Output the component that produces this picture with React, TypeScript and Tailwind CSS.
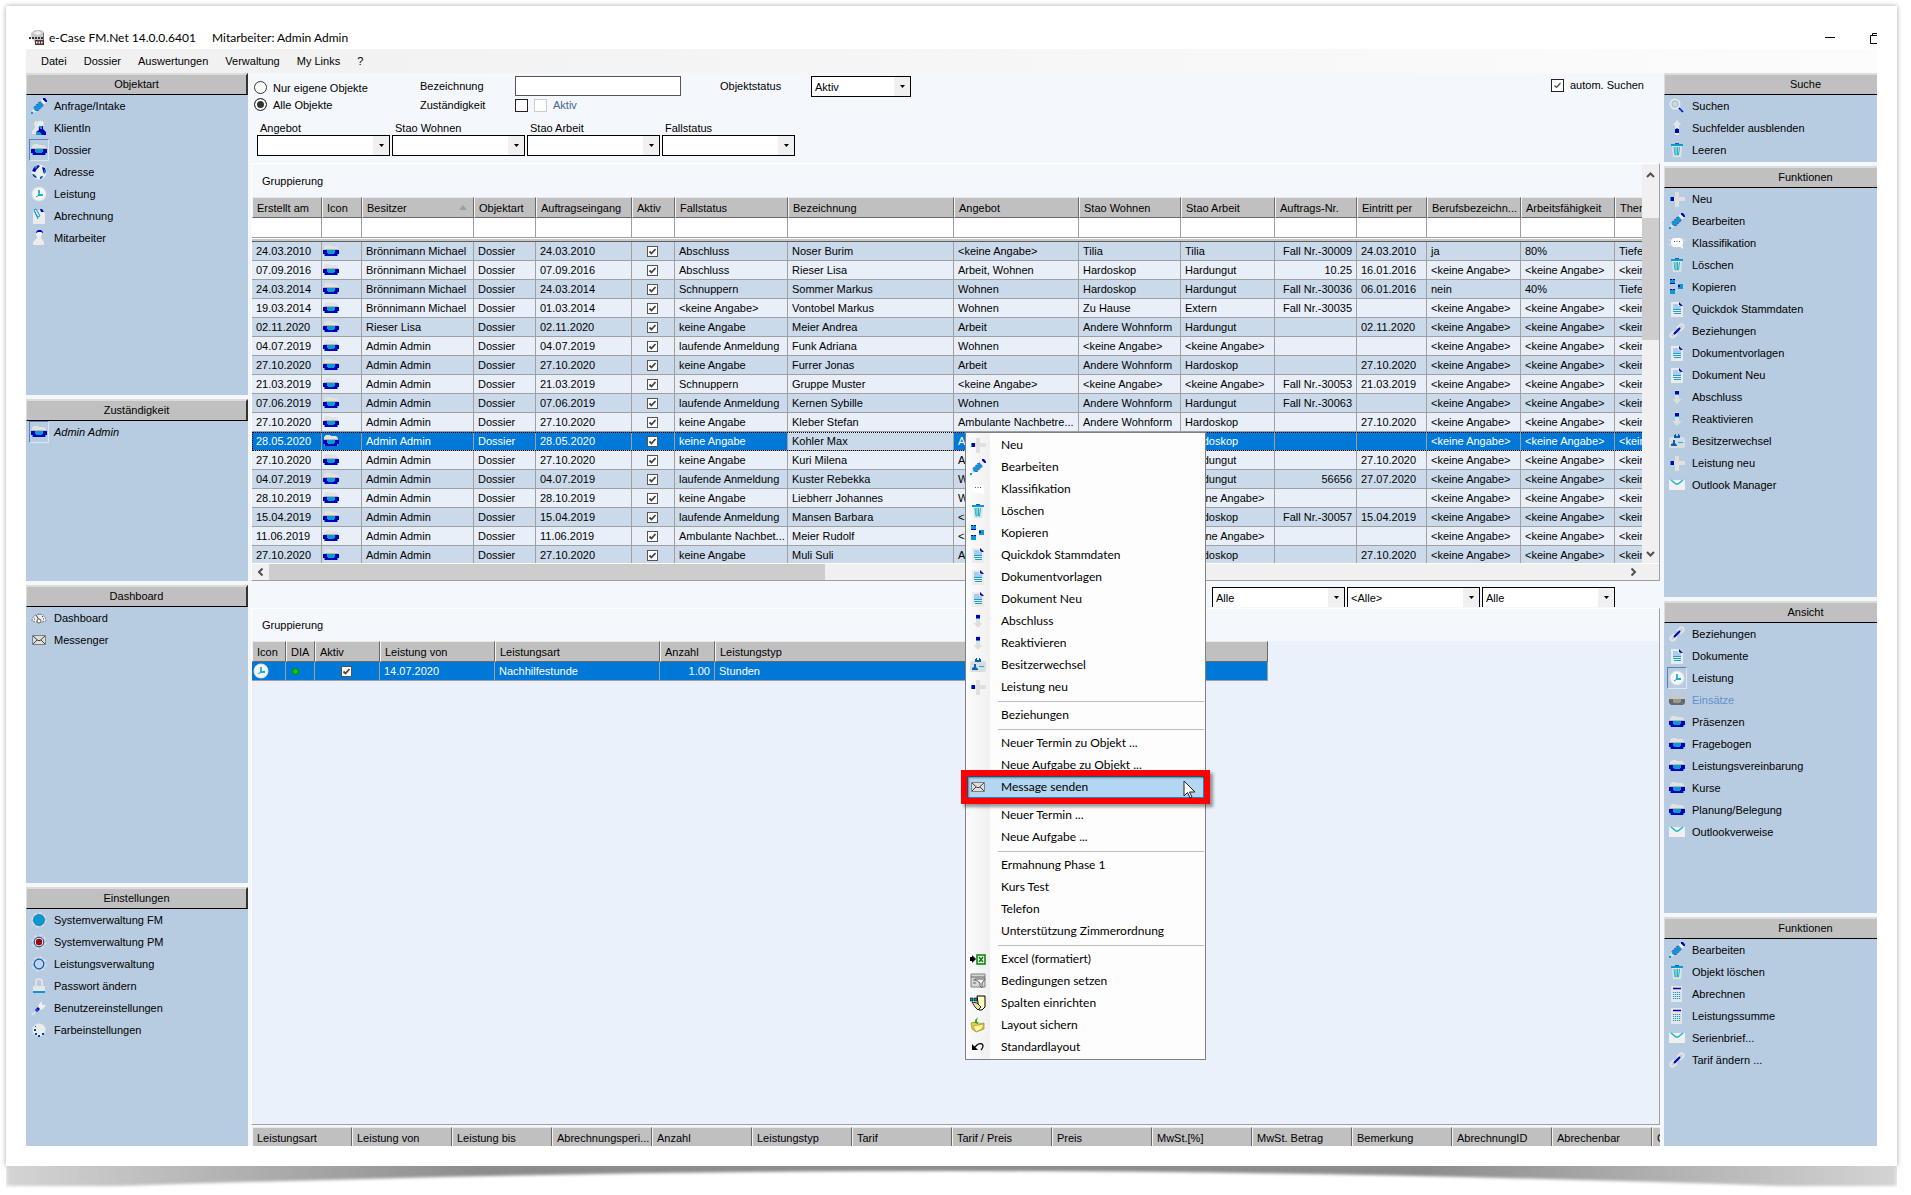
import type { ReactNode } from 'react'
import clsx from 'clsx'

type IconName =
  | 'pencil' | 'person' | 'folder' | 'folderGray' | 'globe' | 'clock' | 'clip' | 'staff'
  | 'gauge' | 'mail' | 'gearFull' | 'gearRed' | 'gearRing' | 'lock' | 'wrench' | 'palette'
  | 'search' | 'up' | 'trash' | 'plus' | 'bubble' | 'copy' | 'doc' | 'link' | 'down'
  | 'badge' | 'outlook' | 'calc' | 'excel' | 'filter' | 'columns' | 'save' | 'undo' | 'none'

interface Item {
  icon: IconName
  label: string
  active?: boolean
  disabled?: boolean
  italic?: boolean
}

const gearTeeth = (
  <circle cx="8" cy="8" r="6.8" fill="none" stroke="#dcdcdc" strokeWidth="1.8" strokeDasharray="3 2.3" />
)

const icons: Record<IconName, ReactNode> = {
  none: null,
  pencil: (
    <>
      <path d="M3 10 9.500 3.500 12.500 6.500 6 13l-3.500 0z" fill="#0a9ad2" />
      <path d="M3 9.500 9.500 3M6.500 13l6-6" stroke="#0000b8" strokeWidth="1" strokeDasharray="2 1" />
      <path d="M9.500 2.500 11.500 1l3.500 3.500-2 2z" fill="#f2f2f2" />
      <path d="M12 0h2l2 2.500V4h-1.500L12 1.500z" fill="#0000b8" />
      <path d="M1 12.500 2.500 11 5 13.500 3 14.500z" fill="#e6e6e6" />
      <path d="M0 14h2v2H0z" fill="#0a9ad2" />
    </>
  ),
  person: (
    <>
      <path d="M4 1h2l1 3v4l1 2v4H1v-3l3-3-1-4z" fill="#e6e6e6" />
      <circle cx="9.500" cy="4" r="3.200" fill="#ececec" />
      <path d="M8 6h4v3l3 3v3H5v-3l3-2z" fill="#0000b8" />
      <path d="M8 6h3v3H9zM5 12h4l2 3H5z" fill="#0a9ad2" />
    </>
  ),
  folder: (
    <>
      <path d="M1 6V4l2-2h4l1 1h5l2 2v2H1z" fill="#e2e2e2" />
      <path d="M1 6.500h14" stroke="#b4b4b4" />
      <path d="M0 7h16v4h-1v2H1v-2H0z" fill="#0000b8" />
      <path d="M4 7h8v3h-1v1H5v-1H4z" fill="#0a9ad2" />
      <path d="M1 11h1v2H1zM14 11h1v2h-1z" fill="#18a0d0" />
    </>
  ),
  folderGray: (
    <>
      <path d="M1 6V4l2-2h4l1 1h5l2 2v2H1z" fill="#c8c8c8" />
      <path d="M0 7h16v4l-2 2H2l-2-2z" fill="#686868" />
      <path d="M4 7h8v3l-2 1H6l-2-1z" fill="#989898" />
    </>
  ),
  globe: (
    <>
      <circle cx="8" cy="8" r="7.500" fill="#e8eef4" />
      <path d="M3 3 7 1l2 1-3 3-2 3-3-1zM11 3l3 1 1 4-2 2-1-3zM1 10l3 1 2 3-3-1zM9 13l3-1-1 2-2 1z" fill="#0000b8" />
      <path d="M3 3 7 1 5 5zM13 5l2 3-2 2zM2 10l2 1v2zM9 13l2-1-1 3z" fill="#0a9ad2" />
    </>
  ),
  clock: (
    <>
      <circle cx="8" cy="8" r="7.500" fill="#dedede" />
      <circle cx="8" cy="8" r="6.500" fill="#f6f6f6" />
      <path d="M8 4v5h4" fill="none" stroke="#18b4cc" strokeWidth="1.800" />
      <path d="M8 9l-3 2" stroke="#0a9ad2" />
    </>
  ),
  clip: (
    <>
      <path d="M2 2h9l3 3v11H2z" fill="#ebebeb" />
      <path d="M3 3l4 6 2-1-4-7-2 1 4 9" fill="none" stroke="#0a9ad2" />
      <path d="M9 1h2l2 3h-3z" fill="#0000b8" />
    </>
  ),
  staff: (
    <>
      <circle cx="8" cy="4" r="3" fill="#f0f0f0" />
      <path d="M5 3V2l2-2h3l2 2v1l-2-1H7z" fill="#0000b8" />
      <path d="M6 6h4v2l3 4v3H2v-3l4-4z" fill="#ececec" />
    </>
  ),
  gauge: (
    <>
      <path d="M1 11a7 7 0 0 1 14 0l-4 1H5z" fill="#ececec" stroke="#808080" strokeDasharray="2 1" />
      <path d="M8 10 5 5M3 9l1 0M8 4v1M12 6l-1 1M12 9h1" stroke="#404040" />
      <circle cx="8" cy="11" r="2" fill="#fff" stroke="#606060" />
    </>
  ),
  mail: (
    <>
      <path d="M1.500 3.500h13v9h-13z" fill="#dedede" stroke="#808080" />
      <path d="M2 4l5 4.500h2L14 4M2 12l4-4M14 12l-4-4" fill="none" stroke="#404040" />
    </>
  ),
  gearFull: (
    <>
      {gearTeeth}
      <circle cx="8" cy="8" r="5.500" fill="#0a9ad2" stroke="#0060b8" strokeWidth=".6" />
    </>
  ),
  gearRed: (
    <>
      {gearTeeth}
      <circle cx="8" cy="8" r="4.800" fill="#e8e8e8" stroke="#1040a8" strokeWidth="1" />
      <circle cx="8" cy="8" r="3.200" fill="#a00000" />
    </>
  ),
  gearRing: (
    <>
      {gearTeeth}
      <circle cx="8" cy="8" r="4.800" fill="#c4d4e6" stroke="#0060c0" strokeWidth="1.200" />
    </>
  ),
  lock: (
    <>
      <path d="M5 8V4a3 3 0 0 1 6 0v4" fill="none" stroke="#e0e0e0" strokeWidth="2" />
      <path d="M2 8h12v5H2z" fill="#e6e6e6" />
      <path d="M2 13h12v2H2z" fill="#0a9ad2" />
    </>
  ),
  wrench: (
    <>
      <path d="M7 8 8 4l3-3v4h4l-3 4-3 1z" fill="#f0f0f0" />
      <path d="M4 10l3-3 2 2-3 3z" fill="#0000b8" />
      <path d="M5 10l1-1 1 1-1 1z" fill="#0a9ad2" />
      <path d="M4 12l-3 3" stroke="#e0e0e0" strokeWidth="2" />
    </>
  ),
  palette: (
    <>
      <circle cx="8" cy="8" r="6.500" fill="#ececec" />
      <path d="M4 4h1v1H4zM3 7h2v2H3zM4 11h2v2H4zM7 13h2v2H7zM11 11h2v2h-2z" fill="#0040b8" />
      <path d="M12 2h1v1h-1zM14 5h1v1h-1zM1 5h1v1H1zM1 11h1v1H1z" fill="#e0e0e0" />
    </>
  ),
  search: (
    <>
      <circle cx="6" cy="6" r="4.800" fill="#c8dae8" stroke="#e8e8e8" strokeWidth="1.500" />
      <circle cx="6" cy="6" r="3" fill="none" stroke="#90b8c0" strokeWidth=".7" />
      <path d="M10 10l4 4" stroke="#0000b8" strokeWidth="1.600" />
      <path d="M11 12l1 1" stroke="#0a9ad2" strokeWidth="1.500" />
    </>
  ),
  up: (
    <>
      <path d="M8 0l4 5H10v10H6V5H4z" fill="#e6e6e6" />
      <path d="M6 9h4v4H6z" fill="#0000b8" />
      <path d="M7 8h2v1H7z" fill="#0a9ad2" />
    </>
  ),
  down: (
    <>
      <path d="M8 15l4.500-5H10V1H6v9H3.500z" fill="#dedede" />
      <path d="M6 2h4v4H6z" fill="#0000b8" />
      <path d="M6 5h4v1H6z" fill="#0a9ad2" />
    </>
  ),
  trash: (
    <>
      <path d="M3 4h10l-1 11H4z" fill="#e2e2e2" />
      <path d="M2 2h12v2H2z" fill="#0a9ad2" />
      <path d="M6 1h4v1H6z" fill="#0a60c0" />
      <path d="M5 5l1 8h1V5M8.500 5v8h1l1-8" fill="none" stroke="#18b4cc" />
    </>
  ),
  plus: (
    <>
      <path d="M6 1h4v5h6v4h-6v6H6v-6H1V6h5z" fill="#e0e0e0" />
      <path d="M1 6h2v4H1z" fill="#0a9ad2" />
      <path d="M2 6h3v4H2z" fill="#0000b8" />
    </>
  ),
  bubble: (
    <>
      <rect x="2" y="3" width="12" height="9" rx="4" fill="#fff" />
      <path d="M10 11h4v3z" fill="#fff" />
      <path d="M5 6h1v1H5zM7.500 6h1v1h-1zM10 6h1v1h-1z" fill="#406080" />
      <path d="M0 5h1M0 10h1M15 5h1" stroke="#fff" />
    </>
  ),
  copy: (
    <>
      <path d="M1 0h5v5H1zM1 10h5v5H1zM9 5h5v5H9z" fill="#0a9ad2" />
      <path d="M1 0h2v1H1zM4 0h2v1H4zM1 4h5v1H1zM1 10h2v1H1zM4 10h2v1H4zM9 6h2v2H9z" fill="#0000b8" />
      <path d="M7 3l2 2M7 13l2-2M14 8h2" stroke="#e0e0e0" strokeDasharray="1 1" />
    </>
  ),
  doc: (
    <>
      <path d="M2 1h9l3 3v12H2z" fill="#ebebeb" />
      <path d="M4 3h5v2h3v3H4z" fill="#a8ccf0" />
      <path d="M10 1l4 4h-2l-2-1z" fill="#0000a0" />
      <path d="M4 8.500h8M4 10.500h8M5 12.500h7" stroke="#18a0c8" />
    </>
  ),
  link: (
    <>
      <path d="M8 5 11 2a2 2 0 0 1 3 3l-3 3M5 8 2 11a2 2 0 0 0 3 3l3-3" fill="none" stroke="#e4e4e4" strokeWidth="2" />
      <path d="M5 11l6-6" stroke="#0000b8" strokeWidth="2" />
    </>
  ),
  badge: (
    <>
      <rect x="0" y="4" width="16" height="11" rx="2" fill="#dcdcdc" />
      <path d="M5 5V2h1V1h1v2h2V1h1v1h1v3z" fill="#0060b8" />
      <path d="M4 7h2v3l2 2v1H2v-2l2-1z" fill="#0a60c0" />
      <path d="M9 7h5v4H9z" fill="#c0e0f8" />
      <path d="M9 9.500h5" stroke="#18b4cc" />
    </>
  ),
  outlook: (
    <>
      <path d="M0 3h16v10H0z" fill="#f0f0f0" />
      <path d="M2 3l5 4h2l5-4" fill="none" stroke="#18b4cc" strokeWidth="1.400" />
    </>
  ),
  calc: (
    <>
      <path d="M2 0h11v16H2z" fill="#e6e6e6" />
      <path d="M4 2.500h8" stroke="#0000b8" strokeWidth="1.500" />
      <path d="M4 6.500h8M4 8.500h8M4 10.500h8M4 12.500h8" stroke="#0a9ad2" strokeDasharray="1.200 .8" strokeWidth="1" />
    </>
  ),
  excel: (
    <>
      <path d="M0 6h2V4l4 4-4 4v-2H0z" fill="#000" />
      <path d="M7 4h8v9H7z" fill="#fff" stroke="#008000" strokeWidth="1.500" />
      <path d="M9 6l4 5M13 6l-4 5" stroke="#008000" strokeWidth="1.500" />
    </>
  ),
  filter: (
    <>
      <path d="M1 1h14v13H1z" fill="#d8d8d8" stroke="#808080" />
      <path d="M1 4h14M3 7h3M3 10h3" stroke="#606060" />
      <path d="M5 6h10l-3 4v5l-2-2v-3z" fill="#f4f4f4" stroke="#606060" />
    </>
  ),
  columns: (
    <>
      <path d="M7 1h8v11l-3 3H9z" fill="#ffffc0" stroke="#000" />
      <path d="M0 3h3v3H0zM4 3h3v3H4z" fill="#00a0a8" stroke="#000" strokeWidth=".6" />
      <path d="M2 7l5 1 4 4-3 3-3-3z" fill="#e0e0a8" stroke="#000" strokeWidth=".8" />
    </>
  ),
  save: (
    <>
      <path d="M1 6l5-1 2 2 6-1v6l-8 3-4-3z" fill="#e8d050" stroke="#a08820" strokeWidth=".7" />
      <path d="M3 9l11-2-2 5-6 3z" fill="#fff4a0" stroke="#a08820" strokeWidth=".6" />
      <path d="M8 0 5 3v2H3l4 2 2-2H7V3z" fill="#40a828" />
    </>
  ),
  undo: (
    <>
      <path d="M2 5v6h6z" fill="#000" />
      <path d="M4 9l3-3c2-2 6-2 6 1 0 2-1 3-2 4" fill="none" stroke="#000" strokeWidth="1.200" />
    </>
  ),
}

function Icon({ name }: { name: IconName }) {
  return (
    <svg viewBox="0 0 16 16" className="size-4 shrink-0" aria-hidden="true">
      {icons[name]}
    </svg>
  )
}

function Check({ label, checked, disabled, small }: { label: string; checked?: boolean; disabled?: boolean; small?: boolean }) {
  return (
    <span className="inline-grid place-items-center align-middle">
      <input
        type="checkbox"
        aria-label={label}
        defaultChecked={checked}
        disabled={disabled}
        className={clsx(
          'col-start-1 row-start-1 appearance-none bg-white border',
          small ? 'size-[11px] border-[#555]' : 'size-[13px]',
          !small && (disabled ? 'border-[#ccc]' : 'border-[#222]'),
        )}
      />
      {checked && (
        <svg viewBox="0 0 11 11" className="col-start-1 row-start-1 size-[11px] pointer-events-none" aria-hidden="true">
          <path d="M2.500 5.500 4.500 7.500 8.500 3" fill="none" stroke="#444" strokeWidth={small ? 1.8 : 1.2} />
        </svg>
      )}
    </span>
  )
}

function Combo({ label, value = '', className }: { label: string; value?: string; className?: string }) {
  return (
    <span className={clsx('grid border border-black bg-white', className)}>
      <select
        aria-label={label}
        className="col-start-1 row-start-1 w-full appearance-none bg-transparent pl-[3px] text-[11px] leading-4 outline-none"
      >
        <option>{value}</option>
      </select>
      <span className="col-start-1 row-start-1 justify-self-end w-4 bg-[#f0f0f0] grid place-items-center pointer-events-none">
        <svg viewBox="0 0 5 3" className="w-[5px] h-[3px]" aria-hidden="true">
          <path d="M0 0h5L2.500 3z" fill="#000" />
        </svg>
      </span>
    </span>
  )
}

/* ── Seitenleisten ─────────────────────────────── */

interface PanelData {
  title: string
  items: Item[]
}

const leftPanels: PanelData[] = [
  {
    title: 'Objektart',
    items: [
      { icon: 'pencil', label: 'Anfrage/Intake' },
      { icon: 'person', label: 'KlientIn' },
      { icon: 'folder', label: 'Dossier', active: true },
      { icon: 'globe', label: 'Adresse' },
      { icon: 'clock', label: 'Leistung' },
      { icon: 'clip', label: 'Abrechnung' },
      { icon: 'staff', label: 'Mitarbeiter' },
    ],
  },
  { title: 'Zuständigkeit', items: [{ icon: 'folder', label: 'Admin Admin', active: true, italic: true }] },
  {
    title: 'Dashboard',
    items: [
      { icon: 'gauge', label: 'Dashboard' },
      { icon: 'mail', label: 'Messenger' },
    ],
  },
  {
    title: 'Einstellungen',
    items: [
      { icon: 'gearFull', label: 'Systemverwaltung FM' },
      { icon: 'gearRed', label: 'Systemverwaltung PM' },
      { icon: 'gearRing', label: 'Leistungsverwaltung' },
      { icon: 'lock', label: 'Passwort ändern' },
      { icon: 'wrench', label: 'Benutzereinstellungen' },
      { icon: 'palette', label: 'Farbeinstellungen' },
    ],
  },
]

const rightPanels: PanelData[] = [
  {
    title: 'Suche',
    items: [
      { icon: 'search', label: 'Suchen' },
      { icon: 'up', label: 'Suchfelder ausblenden' },
      { icon: 'trash', label: 'Leeren' },
    ],
  },
  {
    title: 'Funktionen',
    items: [
      { icon: 'plus', label: 'Neu' },
      { icon: 'pencil', label: 'Bearbeiten' },
      { icon: 'bubble', label: 'Klassifikation' },
      { icon: 'trash', label: 'Löschen' },
      { icon: 'copy', label: 'Kopieren' },
      { icon: 'doc', label: 'Quickdok Stammdaten' },
      { icon: 'link', label: 'Beziehungen' },
      { icon: 'doc', label: 'Dokumentvorlagen' },
      { icon: 'doc', label: 'Dokument Neu' },
      { icon: 'down', label: 'Abschluss' },
      { icon: 'down', label: 'Reaktivieren' },
      { icon: 'badge', label: 'Besitzerwechsel' },
      { icon: 'plus', label: 'Leistung neu' },
      { icon: 'outlook', label: 'Outlook Manager' },
    ],
  },
  {
    title: 'Ansicht',
    items: [
      { icon: 'link', label: 'Beziehungen' },
      { icon: 'doc', label: 'Dokumente' },
      { icon: 'clock', label: 'Leistung', active: true },
      { icon: 'folderGray', label: 'Einsätze', disabled: true },
      { icon: 'folder', label: 'Präsenzen' },
      { icon: 'folder', label: 'Fragebogen' },
      { icon: 'folder', label: 'Leistungsvereinbarung' },
      { icon: 'folder', label: 'Kurse' },
      { icon: 'folder', label: 'Planung/Belegung' },
      { icon: 'outlook', label: 'Outlookverweise' },
    ],
  },
  {
    title: 'Funktionen',
    items: [
      { icon: 'pencil', label: 'Bearbeiten' },
      { icon: 'trash', label: 'Objekt löschen' },
      { icon: 'calc', label: 'Abrechnen' },
      { icon: 'calc', label: 'Leistungssumme' },
      { icon: 'outlook', label: 'Serienbrief...' },
      { icon: 'link', label: 'Tarif ändern ...' },
    ],
  },
]

function Panel({ title, items, clipped }: PanelData & { clipped?: boolean }) {
  return (
    <section className="bg-[#b8cce1] overflow-hidden">
      <h2
        className={clsx(
          'h-[22px] bg-[#c0c0c0] border-t-2 border-l border-t-[#dcdcdc] border-l-[#dcdcdc] border-b border-b-black text-center leading-[18px]',
          clipped ? 'w-[282px]' : 'border-r-2 border-r-[#333]',
        )}
      >
        {title}
      </h2>
      <ul>
        {items.map(item => (
          <li key={item.label}>
            <button
              disabled={item.disabled}
              className={clsx(
                'flex items-center gap-[5px] h-[22px] pl-[3px] whitespace-nowrap',
                item.disabled && 'text-[#5f90cc]',
                item.italic && 'italic',
              )}
            >
              <span
                className={clsx(
                  'w-5 h-[22px] grid place-items-center border',
                  item.active ? 'border-t-[#5a82b4] border-l-[#5a82b4] border-b-[#dce6f0] border-r-[#dce6f0]' : 'border-transparent',
                )}
              >
                <Icon name={item.icon} />
              </span>
              {item.label}
            </button>
          </li>
        ))}
      </ul>
    </section>
  )
}

/* ── Dossier-Tabelle ───────────────────────────── */

const KA = '<keine Angabe>'
const BM = 'Brönnimann Michael'
const AA = 'Admin Admin'
const AW = 'Andere Wohnform'
const LA = 'laufende Anmeldung'
const KE = 'keine Angabe'

const columns = [
  'Erstellt am', 'Icon', 'Besitzer', 'Objektart', 'Auftragseingang', 'Aktiv', 'Fallstatus', 'Bezeichnung', 'Angebot',
  'Stao Wohnen', 'Stao Arbeit', 'Auftrags-Nr.', 'Eintritt per', 'Berufsbezeichn...', 'Arbeitsfähigkeit', 'Thera',
]

// erstellt, besitzer, eingang, fallstatus, bezeichnung, angebot, wohnen, arbeit, nr, eintritt, beruf, fähigkeit, therapie
const rows = [
  ['24.03.2010', BM, '24.03.2010', 'Abschluss', 'Noser Burim', KA, 'Tilia', 'Tilia', 'Fall Nr.-30009', '24.03.2010', 'ja', '80%', 'Tiefe'],
  ['07.09.2016', BM, '07.09.2016', 'Abschluss', 'Rieser Lisa', 'Arbeit, Wohnen', 'Hardoskop', 'Hardungut', '10.25', '16.01.2016', KA, KA, KA],
  ['24.03.2014', BM, '24.03.2014', 'Schnuppern', 'Sommer Markus', 'Wohnen', 'Hardoskop', 'Hardungut', 'Fall Nr.-30036', '06.01.2016', 'nein', '40%', 'Tiefe'],
  ['19.03.2014', BM, '01.03.2014', KA, 'Vontobel Markus', 'Wohnen', 'Zu Hause', 'Extern', 'Fall Nr.-30035', '', KA, KA, KA],
  ['02.11.2020', 'Rieser Lisa', '02.11.2020', KE, 'Meier Andrea', 'Arbeit', AW, 'Hardungut', '', '02.11.2020', KA, KA, KA],
  ['04.07.2019', AA, '04.07.2019', LA, 'Funk Adriana', 'Wohnen', KA, KA, '', '', KA, KA, KA],
  ['27.10.2020', AA, '27.10.2020', KE, 'Furrer Jonas', 'Arbeit', AW, 'Hardoskop', '', '27.10.2020', KA, KA, KA],
  ['21.03.2019', AA, '21.03.2019', 'Schnuppern', 'Gruppe Muster', KA, KA, KA, 'Fall Nr.-30053', '21.03.2019', KA, KA, KA],
  ['07.06.2019', AA, '07.06.2019', LA, 'Kernen Sybille', 'Wohnen', AW, 'Hardungut', 'Fall Nr.-30063', '', KA, KA, KA],
  ['27.10.2020', AA, '27.10.2020', KE, 'Kleber Stefan', 'Ambulante Nachbetre...', AW, 'Hardoskop', '', '27.10.2020', KA, KA, KA],
  ['28.05.2020', AA, '28.05.2020', KE, 'Kohler Max', 'Arbeit', AW, 'Hardoskop', '', '', KA, KA, KA],
  ['27.10.2020', AA, '27.10.2020', KE, 'Kuri Milena', 'Arbeit', AW, 'Hardungut', '', '27.10.2020', KA, KA, KA],
  ['04.07.2019', AA, '04.07.2019', LA, 'Kuster Rebekka', 'Wohnen', AW, 'Hardungut', '56656', '27.07.2020', KA, KA, KA],
  ['28.10.2019', AA, '28.10.2019', KE, 'Liebherr Johannes', 'Wohnen', AW, KA, '', '', KA, KA, KA],
  ['15.04.2019', AA, '15.04.2019', LA, 'Mansen Barbara', KA, AW, 'Hardoskop', 'Fall Nr.-30057', '15.04.2019', KA, KA, KA],
  ['11.06.2019', AA, '11.06.2019', 'Ambulante Nachbet...', 'Meier Rudolf', KA, AW, KA, '', '', KA, KA, KA],
  ['27.10.2020', AA, '27.10.2020', KE, 'Muli Suli', 'Arbeit', AW, 'Hardoskop', '', '27.10.2020', KA, KA, KA],
]
const SELECTED = 10

const th =
  'h-[21px] bg-[#c0c0c0] border-t border-l border-t-[#e8e8e8] border-l-[#f4f4f4] border-r border-r-[#696969] border-b border-b-[#696969] pl-1 text-left font-normal whitespace-nowrap overflow-hidden'
const td = 'border-r border-b border-[#a0a0a0] pl-1 py-0 whitespace-nowrap overflow-hidden'

function DossierTable() {
  return (
    <table className="table-fixed border-separate border-spacing-0 w-[1410px]">
      <colgroup>
        <col className="w-[70px]" />
        <col className="w-10" />
        <col className="w-28" />
        <col className="w-[62px]" />
        <col className="w-24" />
        <col className="w-[43px]" />
        <col className="w-[113px]" />
        <col className="w-[166px]" />
        <col className="w-[125px]" />
        <col className="w-[102px]" />
        <col className="w-[94px]" />
        <col className="w-[82px]" />
        <col className="w-[70px]" />
        <col className="w-[94px]" />
        <col className="w-[94px]" />
        <col />
      </colgroup>
      <thead>
        <tr>
          {columns.map(c => (
            <th key={c} className={th}>
              {c === 'Besitzer' ? (
                <span className="flex items-center justify-between pr-1.5">
                  {c}
                  <svg viewBox="0 0 8 5" className="w-2 h-[5px]" aria-hidden="true">
                    <path d="M0 5h8L4 0z" fill="#a0a0a0" />
                  </svg>
                </span>
              ) : c}
            </th>
          ))}
        </tr>
        <tr>
          {columns.map(c => (
            <td key={c} className="h-5 bg-white border-r border-b border-[#a0a0a0]" />
          ))}
        </tr>
        <tr>
          <td colSpan={16} className="h-1 bg-[#c8c8c8] border-t border-t-white border-b border-b-[#606060] p-0" />
        </tr>
      </thead>
      <tbody>
        {rows.map((r, i) => {
          const selected = i === SELECTED
          return (
            <tr
              key={i}
              className={clsx(
                'h-[19px]',
                selected
                  ? 'bg-[#0078d7] text-white outline-1 -outline-offset-1 outline-dotted outline-black'
                  : i % 2 ? 'bg-[#e8eff8]' : 'bg-[#cbdaea]',
              )}
            >
              <td className={td}>{r[0]}</td>
              <td className="border-r border-b border-[#a0a0a0] p-0 pl-px">
                <Icon name="folder" />
              </td>
              <td className={td}>{r[1]}</td>
              <td className={td}>Dossier</td>
              <td className={td}>{r[2]}</td>
              <td className="border-r border-b border-[#a0a0a0] p-0 pr-px text-center leading-none">
                <Check label={`${r[4]} aktiv`} checked small />
              </td>
              <td className={td}>{r[3]}</td>
              <td className={clsx(td, selected && 'bg-[#cbdaea] text-black')}>{r[4]}</td>
              <td className={td}>{r[5]}</td>
              <td className={td}>{r[6]}</td>
              <td className={td}>{r[7]}</td>
              <td className={clsx(td, 'text-right pr-1')}>{r[8]}</td>
              <td className={td}>{r[9]}</td>
              <td className={td}>{r[10]}</td>
              <td className={td}>{r[11]}</td>
              <td className={td}>{r[12]}</td>
            </tr>
          )
        })}
      </tbody>
    </table>
  )
}

function Chevron({ className }: { className?: string }) {
  return (
    <svg viewBox="0 0 9 6" className={clsx('w-[9px] h-1.5', className)} aria-hidden="true">
      <path d="M1 5l3.500-3.500L8 5" fill="none" stroke="#505050" strokeWidth="2" />
    </svg>
  )
}

function DossierGrid() {
  return (
    <section className="flex-[418_1_0] min-h-0 flex flex-col border-t border-l border-white border-r border-r-[#a0a0a0] border-b border-b-[#a0a0a0]">
      <div className="flex-1 min-h-0 flex">
        <div className="flex-1 min-w-0 overflow-hidden">
          <p className="h-[33px] pl-2.5 leading-[34px]">Gruppierung</p>
          <DossierTable />
        </div>
        <div className="w-[17px] bg-[#f0f0f0] flex flex-col">
          <button aria-label="Nach oben" className="h-[54px] pt-2 flex justify-center">
            <Chevron />
          </button>
          <div className="h-[122px] bg-[#cdcdcd]" />
          <button aria-label="Nach unten" className="mt-auto h-4 pt-1 flex justify-center">
            <Chevron className="rotate-180" />
          </button>
        </div>
      </div>
      <div className="h-[17px] bg-[#f0f0f0] border-t border-t-white flex items-center">
        <button aria-label="Nach links" className="w-[17px] grid place-items-center">
          <Chevron className="-rotate-90" />
        </button>
        <div className="w-[556px] h-full bg-[#cdcdcd]" />
        <button aria-label="Nach rechts" className="ml-auto mr-[17px] w-[17px] grid place-items-center">
          <Chevron className="rotate-90" />
        </button>
      </div>
    </section>
  )
}

/* ── Leistungen ────────────────────────────────── */

const sumColumns = [
  'Leistungsart', 'Leistung von', 'Leistung bis', 'Abrechnungsperi...', 'Anzahl', 'Leistungstyp', 'Tarif', 'Tarif / Preis',
  'Preis', 'MwSt.[%]', 'MwSt. Betrag', 'Bemerkung', 'AbrechnungID', 'Abrechenbar', 'CHF',
]

function LeistungGrid() {
  return (
    <>
      <section className="flex-[517_1_0] min-h-0 flex flex-col border-t border-l border-white border-r border-r-[#a0a0a0] border-b border-b-[#a0a0a0] bg-[#eaf1fa]">
        <p className="h-8 pl-2.5 leading-8 bg-[#f4f8fc]">Gruppierung</p>
        <table className="table-fixed border-separate border-spacing-0 w-[1016px]">
          <colgroup>
            <col className="w-[34px]" />
            <col className="w-[29px]" />
            <col className="w-[65px]" />
            <col className="w-[115px]" />
            <col className="w-[165px]" />
            <col className="w-[55px]" />
            <col />
          </colgroup>
          <thead>
            <tr>
              {['Icon', 'DIA', 'Aktiv', 'Leistung von', 'Leistungsart', 'Anzahl', 'Leistungstyp'].map(c => (
                <th key={c} className={th}>{c}</th>
              ))}
            </tr>
          </thead>
          <tbody>
            <tr className="h-[19px] bg-[#0078d7] text-white">
              <td className="border-r border-b border-[#a0a0a0] p-0 pl-px"><Icon name="clock" /></td>
              <td className="border-r border-b border-[#a0a0a0] p-0">
                <span className="block ml-1.5 size-[7px] rounded-full bg-[#00d000] border border-[#008000]" />
              </td>
              <td className="border-r border-b border-[#a0a0a0] p-0 pr-px text-center leading-none">
                <Check label="Leistung aktiv" checked small />
              </td>
              <td className={td}>14.07.2020</td>
              <td className={td}>Nachhilfestunde</td>
              <td className={clsx(td, 'text-right pr-1')}>1.00</td>
              <td className={td}>Stunden</td>
            </tr>
          </tbody>
        </table>
      </section>
      <div className="h-[21px] pt-0.5 pl-px overflow-hidden">
        <table className="table-fixed border-separate border-spacing-0 w-[1500px]">
          <thead>
            <tr>
              {sumColumns.map(c => (
                <th key={c} className={th}>{c}</th>
              ))}
            </tr>
          </thead>
        </table>
      </div>
    </>
  )
}

/* ── Filterleiste ──────────────────────────────── */

function Radio({ label, checked }: { label: string; checked?: boolean }) {
  return (
    <label className="flex items-center gap-1.5 h-[17px]">
      <input
        type="radio"
        name="objekte"
        defaultChecked={checked}
        className="appearance-none size-[13px] rounded-full border border-[#333] bg-white checked:bg-[#333] checked:shadow-[inset_0_0_0_2px_white]"
      />
      {label}
    </label>
  )
}

function FilterBar() {
  return (
    <form className="h-[90px] shrink-0 pt-[3px]">
      <div className="flex h-[38px]">
        <div className="w-[169px] pl-[3px] pt-[3px]">
          <Radio label="Nur eigene Objekte" />
          <Radio label="Alle Objekte" checked />
        </div>
        <div className="w-[300px]">
          <div className="flex items-center h-5">
            <label htmlFor="bezeichnung" className="w-[95px]">Bezeichnung</label>
            <input id="bezeichnung" className="w-[166px] h-5 bg-white border border-[#555]" />
          </div>
          <div className="flex items-center h-[18px]">
            <span className="w-[95px]">Zuständigkeit</span>
            <Check label="Zuständigkeit" />
            <span className="flex items-center gap-1.5 ml-1.5 text-[#45688c]">
              <Check label="Aktiv" disabled />
              Aktiv
            </span>
          </div>
        </div>
        <div className="flex h-[21px]">
          <span className="w-[91px] leading-5">Objektstatus</span>
          <Combo label="Objektstatus" value="Aktiv" className="w-[100px] h-[21px]" />
        </div>
        <div className="ml-auto mr-4 flex h-[18px] items-center gap-1.5">
          <Check label="autom. Suchen" checked />
          autom. Suchen
        </div>
      </div>
      <div className="flex gap-0.5 pl-1.5 pt-[7px]">
        {['Angebot', 'Stao Wohnen', 'Stao Arbeit', 'Fallstatus'].map(l => (
          <div key={l} className="w-[133px]">
            <span className="block pl-[3px] leading-[14px]">{l}</span>
            <Combo label={l} className="h-[21px]" />
          </div>
        ))}
      </div>
    </form>
  )
}

/* ── Kontextmenü ───────────────────────────────── */

const menuGroups: Item[][] = [
  [...rightPanels[1].items.slice(0, 6), ...rightPanels[1].items.slice(7, 13)],
  [{ icon: 'none', label: 'Beziehungen' }],
  [
    { icon: 'none', label: 'Neuer Termin zu Objekt ...' },
    { icon: 'none', label: 'Neue Aufgabe zu Objekt ...' },
    { icon: 'mail', label: 'Message senden', active: true },
  ],
  [
    { icon: 'none', label: 'Neuer Termin ...' },
    { icon: 'none', label: 'Neue Aufgabe ...' },
  ],
  [
    { icon: 'none', label: 'Ermahnung Phase 1' },
    { icon: 'none', label: 'Kurs Test' },
    { icon: 'none', label: 'Telefon' },
    { icon: 'none', label: 'Unterstützung Zimmerordnung' },
  ],
  [
    { icon: 'excel', label: 'Excel (formatiert)' },
    { icon: 'filter', label: 'Bedingungen setzen' },
    { icon: 'columns', label: 'Spalten einrichten' },
    { icon: 'save', label: 'Layout sichern' },
    { icon: 'undo', label: 'Standardlayout' },
  ],
]

function ContextMenu() {
  return (
    <div
      role="menu"
      className="absolute left-[717px] top-[359px] w-[241px] p-px border border-[#808080] bg-[linear-gradient(to_right,#fcfcfc,#f0f0f0_24px,#fdfdfd_24px)] font-['Lato','Open_Sans',sans-serif] text-[12px]"
    >
      {menuGroups.map((group, g) => (
        <div key={g}>
          {g > 0 && <hr className="ml-[31px] mt-[3px] mb-0.5 border-0 border-t border-[#bdbdbd]" />}
          {group.map(item => (
            <button
              key={item.label}
              role="menuitem"
              className={clsx(
                'relative flex items-center w-full h-[22px] pl-[3px] gap-[15px] whitespace-nowrap',
                item.active && 'bg-[#b3d7f3] shadow-[inset_0_0_0_1px_#2a80c8]',
              )}
            >
              <Icon name={item.icon} />
              {item.label}
              {item.active && (
                <>
                  <span className="absolute -inset-1.5 border-[6px] border-[#fe0000] shadow-[3px_3px_3px_rgba(0,0,0,0.4),inset_2px_2px_2px_rgba(0,0,0,0.4)]" />
                  <svg viewBox="0 0 13 19" className="absolute right-2 top-1 w-[13px] h-[19px]" aria-hidden="true">
                    <path d="M1 1v15l3.500-3.500L7 18l2-1-2.500-5H12z" fill="#fff" stroke="#222" />
                  </svg>
                </>
              )}
            </button>
          ))}
        </div>
      ))}
    </div>
  )
}

function TitleBar() {
  return (
    <header className="h-[43px] pt-5 pl-[3px] flex items-center gap-1 font-['Lato','Open_Sans',sans-serif] text-[12px]">
      <svg viewBox="0 0 16 16" className="size-4" aria-hidden="true">
        <path d="M2 3 6 0h6l3 2v13H7L2 6z" fill="#c8c8c8" />
        <path d="M4 3l5-2 4 2-4 2z" fill="#f0f0f0" />
        <path d="M14.500 3v12" stroke="#707070" />
        <path d="M0 8h14" stroke="#333" strokeWidth="2" strokeDasharray="2 1" />
        <path d="M6 10h9v5H6z" fill="#5c3030" />
        <path d="M7 12.500h7" stroke="#eee" strokeWidth="2" strokeDasharray="1.500 1" />
      </svg>
      <h1>e-Case FM.Net 14.0.0.6401</h1>
      <span className="ml-3">Mitarbeiter: Admin Admin</span>
      <div className="ml-auto h-full flex items-center gap-[35px]">
        <button aria-label="Minimieren" className="w-2.5 h-px bg-black" />
        <button aria-label="Wiederherstellen">
          <svg viewBox="0 0 7 12" className="w-[7px] h-3" aria-hidden="true">
            <path d="M7 3.500H.5v8H7M2.500 3V1.500H7" fill="none" stroke="#000" />
          </svg>
        </button>
      </div>
    </header>
  )
}

export default function App() {
  return (
    <div className="h-screen flex flex-col overflow-hidden bg-white pt-1.5 pl-1.5 pr-3.5 font-['Liberation_Sans',Arial,sans-serif] text-[11px] leading-4 text-black">
      <div className="flex-1 min-h-0 flex flex-col pl-5 pr-5 pb-5 bg-white shadow-[0_0_5px_rgba(0,0,0,0.35)]">
        <TitleBar />
        <nav className="h-6 shrink-0 flex items-center gap-[17px] pl-[15px] bg-linear-to-r from-[#f0f0f0] to-[#fcfcfc]">
          {['Datei', 'Dossier', 'Auswertungen', 'Verwaltung', 'My Links', '?'].map(m => (
            <button key={m}>{m}</button>
          ))}
        </nav>
        <main className="flex-1 min-h-0 grid grid-cols-[222px_minmax(0,1fr)_213px] bg-[#f4f8fc]">
          <aside className="grid grid-rows-[322fr_182fr_298fr_259fr] gap-1 min-h-0">
            {leftPanels.map(p => <Panel key={p.title} {...p} />)}
          </aside>
          <div className="relative min-h-0 flex flex-col pl-[3px] pr-1">
            <FilterBar />
            <DossierGrid />
            <div className="h-[27px] shrink-0 pt-1.5 pr-[45px] flex justify-end gap-0.5">
              <Combo label="Filter 1" value="Alle" className="w-[133px] h-5 border-b-0" />
              <Combo label="Filter 2" value="<Alle>" className="w-[133px] h-5 border-b-0" />
              <Combo label="Filter 3" value="Alle" className="w-[133px] h-5 border-b-0" />
            </div>
            <LeistungGrid />
            <ContextMenu />
          </div>
          <aside className="grid grid-rows-[89fr_431fr_312fr_229fr] gap-1 min-h-0">
            {rightPanels.map((p, i) => <Panel key={i} {...p} clipped />)}
          </aside>
        </main>
      </div>
      {/* gewölbter Blattschatten */}
      <svg viewBox="0 0 1000 29" preserveAspectRatio="none" className="w-full h-[29px] shrink-0" aria-hidden="true">
        <defs>
          <linearGradient id="curl" x1="0" x2="1" y1="0" y2="0">
            <stop offset="0" stopColor="#d4d4d4" />
            <stop offset=".25" stopColor="#8c8c8c" />
            <stop offset=".75" stopColor="#8c8c8c" />
            <stop offset="1" stopColor="#d4d4d4" />
          </linearGradient>
          <filter id="soft" x="-1%" y="-20%" width="102%" height="150%">
            <feGaussianBlur stdDeviation="1 1.500" />
          </filter>
        </defs>
        <path d="M0-4H1000V20H940Q700 5 500 5T60 20H0z" fill="url(#curl)" filter="url(#soft)" />
      </svg>
    </div>
  )
}
